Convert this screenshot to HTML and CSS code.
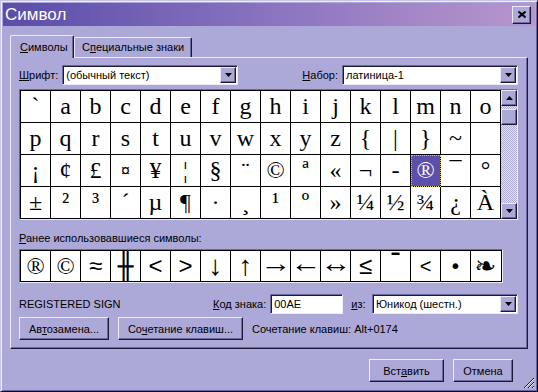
FILE: index.html
```html
<!DOCTYPE html>
<html lang="ru">
<head>
    <meta charset="UTF-8">
    <meta name="viewport" content="width=device-width, initial-scale=1.0">
    <title>Символ</title>
    <link rel="stylesheet" href="styles.css">
</head>
<body>

<div class="dialog">
    <div class="titlebar">
        <span class="title">Символ</span>
        <div class="close raised">
            <svg width="8" height="7" viewBox="0 0 8 7"><path d="M0.5 0.5L7.5 6.5M7.5 0.5L0.5 6.5" stroke="#000" stroke-width="2"/></svg>
        </div>
    </div>

    <div class="tabs">
        <div class="tab tab-active"><u>С</u>имволы</div>
        <div class="tab">С<u>п</u>ециальные знаки</div>
    </div>

    <div class="panel">
        <div class="top-row">
            <div class="field">
                <span class="label"><u>Ш</u>рифт:</span>
                <div class="combo">
                    <span class="combo-text">(обычный текст)</span>
                    <span class="drop raised"><svg width="7" height="4" viewBox="0 0 7 4"><path d="M0 0H7L3.5 4Z"/></svg></span>
                </div>
            </div>
            <div class="field">
                <span class="label"><u>Н</u>абор:</span>
                <div class="combo">
                    <span class="combo-text">латиница-1</span>
                    <span class="drop raised"><svg width="7" height="4" viewBox="0 0 7 4"><path d="M0 0H7L3.5 4Z"/></svg></span>
                </div>
            </div>
        </div>

        <div class="charmap">
            <div class="grid">
                <div class="cell">`</div><div class="cell">a</div><div class="cell">b</div><div class="cell">c</div>
                <div class="cell">d</div><div class="cell">e</div><div class="cell">f</div><div class="cell">g</div>
                <div class="cell">h</div><div class="cell">i</div><div class="cell">j</div><div class="cell">k</div>
                <div class="cell">l</div><div class="cell">m</div><div class="cell">n</div><div class="cell">o</div>

                <div class="cell">p</div><div class="cell">q</div><div class="cell">r</div><div class="cell">s</div>
                <div class="cell">t</div><div class="cell">u</div><div class="cell">v</div><div class="cell">w</div>
                <div class="cell">x</div><div class="cell">y</div><div class="cell">z</div><div class="cell">{</div>
                <div class="cell">|</div><div class="cell">}</div><div class="cell">~</div><div class="cell"></div>

                <div class="cell">¡</div><div class="cell">¢</div><div class="cell">£</div><div class="cell small">¤</div>
                <div class="cell">¥</div><div class="cell">¦</div><div class="cell">§</div><div class="cell">¨</div>
                <div class="cell">©</div><div class="cell">ª</div><div class="cell">«</div><div class="cell">¬</div>
                <div class="cell">-</div><div class="cell selected">®</div><div class="cell">¯</div><div class="cell">°</div>

                <div class="cell">±</div><div class="cell">²</div><div class="cell">³</div><div class="cell">´</div>
                <div class="cell">µ</div><div class="cell">¶</div><div class="cell">·</div><div class="cell">¸</div>
                <div class="cell">¹</div><div class="cell">º</div><div class="cell">»</div><div class="cell">¼</div>
                <div class="cell">½</div><div class="cell">¾</div><div class="cell">¿</div><div class="cell">À</div>
            </div>
            <div class="scrollbar">
                <div class="sb-btn raised"><svg width="7" height="4" viewBox="0 0 7 4"><path d="M3.5 0L7 4H0Z"/></svg></div>
                <div class="sb-gap"></div>
                <div class="sb-thumb raised"></div>
                <div class="sb-track"></div>
                <div class="sb-btn raised"><svg width="7" height="4" viewBox="0 0 7 4"><path d="M0 0H7L3.5 4Z"/></svg></div>
            </div>
        </div>

        <div class="recent-label"><u>Р</u>анее использовавшиеся символы:</div>
        <div class="recent">
            <div class="recent-inner">
                <div class="rcell serif">®</div>
                <div class="rcell serif">©</div>
                <div class="rcell math">≈</div>
                <div class="rcell box">╫</div>
                <div class="rcell math">&lt;</div>
                <div class="rcell math">&gt;</div>
                <div class="rcell arrow">↓</div>
                <div class="rcell arrow">↑</div>
                <div class="rcell harrow"><span class="wide">→</span></div>
                <div class="rcell harrow"><span class="wide">←</span></div>
                <div class="rcell harrow"><span class="wide">↔</span></div>
                <div class="rcell math">≤</div>
                <div class="rcell bar">¯</div>
                <div class="rcell thin">&lt;</div>
                <div class="rcell dot">•</div>
                <div class="rcell flourish">❧</div>
            </div>
        </div>

        <div class="info-row">
            <span class="char-name">REGISTERED SIGN</span>
            <span class="code-label"><u>К</u>од знака:</span>
            <div class="textbox">00AE</div>
            <span class="from-label"><u>и</u>з:</span>
            <div class="combo combo-narrow">
                <span class="combo-text">Юникод (шестн.)</span>
                <span class="drop raised"><svg width="7" height="4" viewBox="0 0 7 4"><path d="M0 0H7L3.5 4Z"/></svg></span>
            </div>
        </div>

        <div class="btn-row">
            <button class="btn btn-autocorrect">Ав<u>т</u>озамена...</button>
            <button class="btn btn-shortcut">Со<u>ч</u>етание клавиш...</button>
            <span class="shortcut-text">Сочетание клавиш: Alt+0174</span>
        </div>
    </div>

    <div class="footer">
        <button class="btn btn-insert">Вст<u>а</u>вить</button>
        <button class="btn btn-cancel">Отмена</button>
    </div>

    <svg class="grip" width="12" height="12" viewBox="0 0 12 12">
        <path d="M11 1L1 11M11 5L5 11M11 9L9 11" stroke="#1c1838" stroke-width="1"/>
        <path d="M11 2L2 11M11 6L6 11M11 10L10 11" stroke="#eceaf8" stroke-width="1"/>
    </svg>
</div>

</body>
</html>
```

FILE: styles.css
```css
* {
    box-sizing: border-box;
}
body {
    margin: 0;
    font-family: "Liberation Sans", Arial, sans-serif;
    font-size: 11px;
    color: #000;
    background-color: #aca8d8;
}
u {
    text-decoration: underline;
    text-underline-offset: 1px;
}
.raised {
    background-color: #aca8d8;
    border: 1px solid;
    border-color: #eceaf8 #1c1838 #1c1838 #eceaf8;
    box-shadow: inset -1px -1px #6c68a0;
}
.dialog {
    position: relative;
    width: 538px;
    height: 392px;
    padding: 2px;
    background-color: #aca8d8;
    border: 1px solid;
    border-color: #c8c4ec #0c0c24 #0c0c24 #c8c4ec;
    box-shadow: inset 1px 1px #f0eefa, inset -1px -1px #6a66a0;
}

/* title bar */
.titlebar {
    display: flex;
    align-items: center;
    justify-content: space-between;
    height: 23px;
    padding: 0 4px 0 2px;
    background: linear-gradient(to right, #5a4ca8, #8a74c0 50%, #b896cc);
}
.title {
    color: #fff;
    font-size: 17px;
    line-height: 23px;
}
.close {
    display: flex;
    align-items: center;
    justify-content: center;
    width: 19px;
    height: 18px;
}

/* tabs */
.tabs {
    display: flex;
    align-items: flex-end;
    height: 22px;
    margin: 9px 0 0 7px;
}
.tab {
    height: 20px;
    padding: 0 7px;
    line-height: 19px;
    background-color: #aca8d8;
    border: 1px solid;
    border-bottom: none;
    border-color: #eceaf8 #1c1838 #1c1838 #eceaf8;
    border-radius: 2px 2px 0 0;
    box-shadow: inset -1px 0 #6c68a0;
}
.tab-active {
    position: relative;
    z-index: 1;
    width: 64px;
    height: 23px;
    margin-bottom: -1px;
    padding: 0 9px;
    line-height: 22px;
}

/* panel */
.panel {
    width: 518px;
    height: 292px;
    margin-left: 7px;
    padding: 7px 9px 0 8px;
    border: 1px solid;
    border-color: #eceaf8 #1c1838 #1c1838 #eceaf8;
    box-shadow: inset -1px -1px #6c68a0;
}
.top-row {
    display: flex;
    justify-content: space-between;
    height: 20px;
}
.field {
    display: flex;
    align-items: center;
}
.label {
    margin-right: 4px;
}
.combo {
    display: flex;
    align-items: center;
    width: 176px;
    height: 20px;
    padding: 1px;
    background-color: #fff;
    border: 1px solid;
    border-color: #6c68a0 #eceaf8 #eceaf8 #6c68a0;
    box-shadow: inset 1px 1px #1c1838;
}
.combo-narrow {
    width: 146px;
    margin-left: auto;
}
.combo-text {
    flex: 1;
    padding-left: 2px;
    white-space: nowrap;
}
.drop {
    display: flex;
    align-items: center;
    justify-content: center;
    width: 16px;
    height: 16px;
}

/* character map */
.charmap {
    display: flex;
    width: 499px;
    height: 131px;
    margin-top: 4px;
    border: 1px solid;
    border-color: #6c68a0 #eceaf8 #eceaf8 #6c68a0;
}
.grid {
    display: flex;
    flex-wrap: wrap;
    width: 481px;
    height: 129px;
    background-color: #fff;
    border-top: 1px solid #000;
    border-left: 1px solid #000;
}
.cell {
    display: flex;
    align-items: center;
    justify-content: center;
    width: 30px;
    height: 32px;
    border-right: 1px solid #000;
    border-bottom: 1px solid #000;
    font-family: "Liberation Serif", "Times New Roman", serif;
    font-size: 24px;
}
.cell.small {
    font-family: "Liberation Sans", Arial, sans-serif;
    font-size: 16px;
}
.cell.selected {
    background-color: #5c50aa;
    color: #fff;
    outline: 1px dotted #d8d070;
    outline-offset: -1px;
}
.scrollbar {
    display: flex;
    flex-direction: column;
    width: 16px;
    background: repeating-conic-gradient(#aca8d8 0% 25%, #e6e4f6 0% 50%) 0 0 / 2px 2px;
}
.sb-btn {
    display: flex;
    align-items: center;
    justify-content: center;
    height: 16px;
}
.sb-gap {
    height: 3px;
}
.sb-thumb {
    height: 16px;
}
.sb-track {
    flex: 1;
}

/* recently used */
.recent-label {
    margin-top: 12px;
    line-height: 13px;
}
.recent {
    width: 484px;
    margin-top: 4px;
    border: 1px solid;
    border-color: #6c68a0 #eceaf8 #eceaf8 #6c68a0;
}
.recent-inner {
    display: flex;
    background-color: #fff;
    border: 1px solid #000;
}
.rcell {
    display: flex;
    align-items: center;
    justify-content: center;
    width: 30px;
    height: 30px;
    line-height: 1;
    border-right: 1px solid #000;
    font-size: 22px;
    font-family: "Liberation Serif", serif;
}
.rcell:last-child {
    width: 29px;
    border-right: none;
}
.rcell.serif {
    font-size: 24px;
}
.rcell.math {
    font-family: "Liberation Sans", sans-serif;
    font-size: 24px;
}
.rcell.arrow {
    font-size: 28px;
}
.rcell.harrow {
    font-size: 26px;
}
.rcell .wide {
    display: inline-block;
    transform: translateY(-2px) scaleX(1.2);
}
.rcell.box {
    font-family: "DejaVu Sans Mono", monospace;
    font-weight: bold;
    font-size: 26px;
}
.rcell.bar {
    font-family: "DejaVu Sans", sans-serif;
    font-weight: bold;
    font-size: 26px;
    align-items: flex-start;
}
.rcell.thin {
    font-family: "Liberation Sans", sans-serif;
    font-size: 20px;
}
.rcell.dot {
    font-family: "DejaVu Sans", sans-serif;
    font-size: 20px;
}
.rcell.flourish {
    font-family: "DejaVu Sans", sans-serif;
    font-size: 26px;
}

/* bottom rows */
.info-row {
    display: flex;
    align-items: center;
    height: 20px;
    margin-top: 11px;
}
.char-name {
    width: 194px;
}
.code-label {
    margin-right: 4px;
}
.textbox {
    width: 73px;
    height: 20px;
    padding: 2px 3px;
    line-height: 14px;
    background-color: #fff;
    border: 1px solid;
    border-color: #6c68a0 #eceaf8 #eceaf8 #6c68a0;
    box-shadow: inset 1px 1px #1c1838;
}
.from-label {
    margin-left: 8px;
}
.btn-row {
    display: flex;
    align-items: center;
    gap: 9px;
    height: 23px;
    margin-top: 3px;
}
.btn {
    height: 23px;
    padding: 0;
    font-family: inherit;
    font-size: 11px;
    color: #000;
    background-color: #aca8d8;
    border: 1px solid;
    border-color: #eceaf8 #1c1838 #1c1838 #eceaf8;
    box-shadow: inset -1px -1px #6c68a0;
}
.btn-autocorrect {
    width: 90px;
}
.btn-shortcut {
    width: 125px;
}
.footer {
    display: flex;
    justify-content: flex-end;
    gap: 9px;
    margin-top: 10px;
    padding-right: 22px;
}
.btn-insert {
    width: 75px;
}
.btn-cancel {
    width: 60px;
}
.grip {
    position: absolute;
    right: 2px;
    bottom: 2px;
}
```
